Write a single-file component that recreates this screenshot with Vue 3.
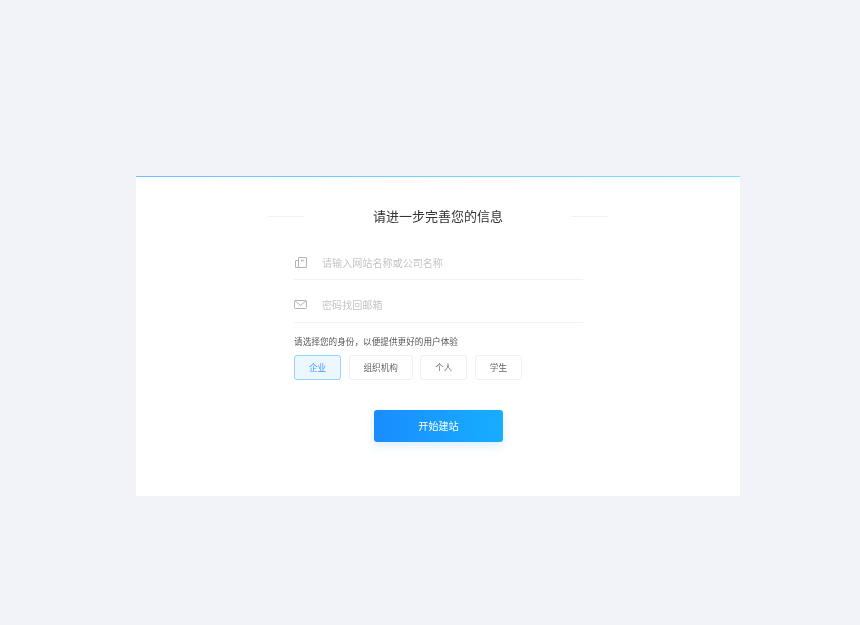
<template>
  <div class="page">
    <div class="card">
      <div class="head">
        <span class="head-line"></span>
        <h2 class="title">请进一步完善您的信息</h2>
        <span class="head-line"></span>
      </div>

      <form class="form" @submit.prevent>
        <label class="field">
          <svg class="icon icon-site" width="12" height="11" viewBox="0 0 12 11" fill="none" stroke="#b4b4b4" stroke-width="1">
            <path d="M3.5 3.5H1a.5.5 0 0 0-.5.5v6.5h3" />
            <path d="M3.5 10.5V1a.5.5 0 0 1 .5-.5h7a.5.5 0 0 1 .5.5v9.5z" />
            <path d="M5.8 3.5h3" stroke-width="1.4" />
          </svg>
          <input class="input" type="text" placeholder="请输入网站名称或公司名称" />
        </label>

        <label class="field">
          <svg class="icon" width="13" height="9" viewBox="0 0 13 9" fill="none" stroke="#b4b4b4" stroke-width="1">
            <rect x="0.5" y="0.5" width="12" height="8" rx="0.8" />
            <path d="M1 1 6.5 5.4 12 1" />
          </svg>
          <input class="input" type="text" placeholder="密码找回邮箱" />
        </label>

        <p class="label">请选择您的身份，以便提供更好的用户体验</p>
        <div class="options">
          <button
            v-for="item in identities"
            :key="item"
            type="button"
            class="option"
            :class="{ active: current === item }"
            @click="current = item"
          >
            {{ item }}
          </button>
        </div>

        <button type="submit" class="submit">开始建站</button>
      </form>
    </div>
  </div>
</template>

<script setup>
import { ref } from 'vue'

const identities = ['企业', '组织机构', '个人', '学生']
const current = ref('企业')
</script>

<style>
html,
body {
  margin: 0;
  background: #f1f3f9;
}
</style>

<style scoped>
.page {
  min-height: 625px;
  box-sizing: border-box;
  padding: 176px 120px 0 136px;
  font-family: "Noto Sans CJK SC", "Liberation Sans", sans-serif;
}

.card {
  width: 604px;
  height: 320px;
  box-sizing: border-box;
  background: #fff;
  border-top: 1.5px solid;
  border-image: linear-gradient(90deg, #6fc3ff, #74e4ff) 1;
  filter: blur(0.3px);
}

.head {
  display: flex;
  align-items: center;
  justify-content: center;
  gap: 68px;
  margin-top: 28px;
  height: 22px;
}

.head-line {
  width: 37px;
  height: 1px;
  background: #f2f2f2;
}

.title {
  margin: 0;
  font-size: 13px;
  font-weight: 400;
  line-height: 22px;
  color: #333;
}

.form {
  width: 289px;
  margin: 11px 0 0 158px;
}

.field {
  display: flex;
  align-items: center;
  height: 42px;
  padding-top: 8px;
  margin-bottom: 1px;
  border-bottom: 1px solid #f2f2f2;
  box-sizing: border-box;
}

.field + .field {
  padding-top: 6px;
}

.icon {
  flex: none;
  width: 13px;
  margin-right: 15px;
}

.icon-site {
  width: 12px;
  margin-left: 1px;
}

.input {
  flex: 1;
  min-width: 0;
  border: 0;
  outline: 0;
  padding: 0;
  background: none;
  font: inherit;
  font-size: 10.08px;
  color: #333;
}

.input::placeholder {
  color: #c4c4c4;
}

.label {
  margin: 11px 0 0;
  font-size: 8.64px;
  line-height: 14px;
  color: #555;
}

.options {
  display: flex;
  gap: 7.5px;
  margin-top: 7px;
  width: 300px;
}

.option {
  height: 25px;
  padding: 0 13.9px 1px;
  border: 1px solid #f0f0f0;
  border-radius: 3px;
  background: #fff;
  font: inherit;
  font-size: 8.64px;
  color: #666;
}

.option.active {
  background: #edf7ff;
  border-color: #91d5ff;
  color: #3f9bff;
}

.submit {
  display: block;
  width: 129px;
  height: 32.4px;
  margin: 29.5px 0 0 80px;
  border: 0;
  border-radius: 3px;
  background: linear-gradient(90deg, #1a8cff, #17aeff);
  box-shadow: 0 4px 10px rgba(30, 150, 255, 0.16);
  font: inherit;
  font-size: 10.08px;
  color: #fff;
}
</style>
